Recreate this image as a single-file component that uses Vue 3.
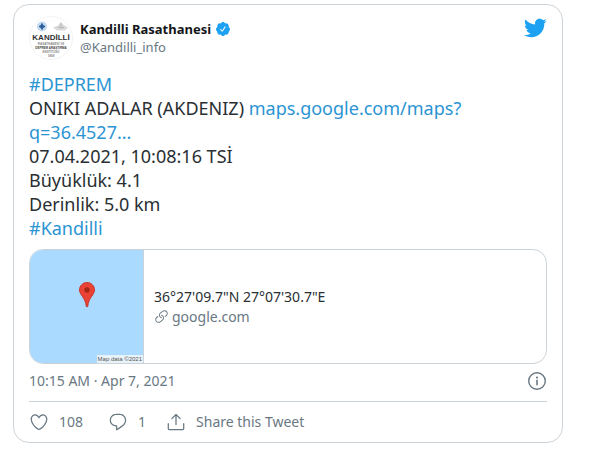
<script setup>
const details = ['07.04.2021, 10:08:16 TSİ', 'Büyüklük: 4.1', 'Derinlik: 5.0 km']
</script>

<template>
  <article class="tweet">
    <header class="head">
      <a class="author" href="#profile">
        <span class="avatar">
          <svg class="emblems" viewBox="0 0 38 15" aria-hidden="true">
            <circle cx="10" cy="9" r="5" fill="#c3d9ef" />
            <path d="M10 6l1 2 2 1-2 1-1 2-1-2-2-1 2-1z" fill="#2f5f9c" stroke="#2f5f9c" />
            <path d="M29 4l2 3 5 3-3 3h-8l-4-3 5-2z" fill="#d9d9d9" />
            <path d="M29 6v5M26 10h6" stroke="#b5b5b5" />
          </svg>
          <span class="avatar-name">KANDİLLİ</span>
          <span class="avatar-small">RASATHANESİ VE</span>
          <span class="avatar-small dark">DEPREM ARAŞTIRMA</span>
          <span class="avatar-small">ENSTİTÜSÜ</span>
          <span class="avatar-small">1868</span>
        </span>
        <span class="names">
          <span class="name">Kandilli Rasathanesi
            <svg class="verified" viewBox="0 0 24 24" aria-label="Verified">
              <path d="M22.5 12.5c0-1.58-.875-2.95-2.148-3.6.154-.435.238-.905.238-1.4 0-2.21-1.71-3.998-3.818-3.998-.47 0-.92.084-1.336.25C14.818 2.415 13.51 1.5 12 1.5s-2.816.917-3.437 2.25c-.415-.165-.866-.25-1.336-.25-2.11 0-3.818 1.79-3.818 4 0 .494.083.964.237 1.4-1.272.65-2.147 2.018-2.147 3.6 0 1.495.782 2.798 1.942 3.486-.02.17-.032.34-.032.514 0 2.21 1.708 4 3.818 4 .47 0 .92-.086 1.335-.25.62 1.334 1.926 2.25 3.437 2.25 1.512 0 2.818-.916 3.437-2.25.415.163.865.248 1.336.248 2.11 0 3.818-1.79 3.818-4 0-.174-.012-.344-.033-.513 1.158-.687 1.943-1.99 1.943-3.484zm-6.616-3.334l-4.334 6.5c-.145.217-.382.334-.625.334-.143 0-.288-.04-.416-.126l-.115-.094-2.415-2.415c-.293-.293-.293-.768 0-1.06s.768-.294 1.06 0l1.77 1.767 3.825-5.74c.23-.345.696-.436 1.04-.207.346.23.44.696.21 1.04z" />
            </svg>
          </span>
          <span class="handle">@Kandilli_info</span>
        </span>
      </a>
      <a class="bird" href="#tweet" aria-label="View on Twitter">
        <svg viewBox="0 0 24 24">
          <path d="M23.643 4.937c-.835.37-1.732.62-2.675.733.962-.576 1.7-1.49 2.048-2.578-.9.534-1.897.922-2.958 1.13-.85-.904-2.06-1.47-3.4-1.47-2.572 0-4.658 2.086-4.658 4.66 0 .364.042.718.12 1.06-3.873-.195-7.304-2.05-9.602-4.868-.4.69-.63 1.49-.63 2.342 0 1.616.823 3.043 2.072 3.878-.764-.025-1.482-.234-2.11-.583v.06c0 2.257 1.605 4.14 3.737 4.568-.392.106-.803.162-1.227.162-.3 0-.593-.028-.877-.082.593 1.85 2.313 3.198 4.352 3.234-1.595 1.25-3.604 1.995-5.786 1.995-.376 0-.747-.022-1.112-.065 2.062 1.323 4.51 2.093 7.14 2.093 8.57 0 13.255-7.098 13.255-13.254 0-.2-.005-.402-.014-.602.91-.658 1.7-1.477 2.323-2.41z" />
        </svg>
      </a>
    </header>

    <div class="body">
      <div><a href="#deprem">#DEPREM</a></div>
      <div>ONIKI ADALAR (AKDENIZ) <a href="#map">maps.google.com/maps?<wbr>q=36.4527...</a></div>
      <div v-for="line in details" :key="line">{{ line }}</div>
      <div><a href="#kandilli">#Kandilli</a></div>
    </div>

    <a class="preview" href="#map">
      <span class="map">
        <svg class="pin" viewBox="0 0 16 26" aria-hidden="true">
          <path d="M8 .5C3.800.5.500 3.800.500 8c0 5 6 7.500 6.800 16.500q.700 1 1.400 0C9.500 15.500 15.500 13 15.500 8 15.500 3.800 12.200.5 8 .5z" fill="#ea4335" stroke="#c5362c" />
          <circle cx="8" cy="8" r="2.700" fill="#a52714" />
        </svg>
        <span class="credit">Map data ©2021</span>
      </span>
      <span class="place">
        <span class="coords">36°27'09.7"N 27°07'30.7"E</span>
        <span class="domain">
          <svg viewBox="0 0 24 24" aria-hidden="true">
            <path d="M11.96 14.945c-.067 0-.136-.01-.203-.027-1.13-.318-2.097-.986-2.795-1.932-.832-1.125-1.176-2.508-.968-3.893s.942-2.605 2.068-3.438l3.53-2.608c2.322-1.716 5.61-1.224 7.33 1.1.83 1.127 1.175 2.51.967 3.895s-.943 2.605-2.07 3.438l-1.48 1.094c-.333.246-.804.175-1.05-.158-.246-.334-.176-.804.158-1.05l1.48-1.095c.803-.592 1.327-1.463 1.476-2.45.148-.988-.098-1.975-.69-2.778-1.225-1.656-3.572-2.01-5.23-.784l-3.53 2.608c-.802.593-1.326 1.464-1.475 2.45-.15.99.097 1.975.69 2.778.498.675 1.187 1.15 1.992 1.377.4.114.633.528.52.928-.092.33-.394.547-.722.547z" />
            <path d="M7.27 22.054c-1.61 0-3.197-.735-4.225-2.125-.832-1.127-1.176-2.51-.968-3.894s.943-2.605 2.07-3.438l1.478-1.094c.334-.245.805-.175 1.05.158s.177.804-.157 1.05l-1.48 1.095c-.803.593-1.326 1.464-1.475 2.45-.148.99.097 1.975.69 2.778 1.225 1.657 3.57 2.01 5.23.785l3.528-2.608c1.658-1.225 2.01-3.57.785-5.23-.498-.674-1.187-1.15-1.992-1.376-.4-.113-.633-.527-.52-.927.112-.4.528-.63.926-.522 1.13.318 2.096.986 2.794 1.932 1.717 2.324 1.224 5.612-1.1 7.33l-3.53 2.608c-.933.693-2.023 1.026-3.105 1.026z" />
          </svg>
          google.com
        </span>
      </span>
    </a>

    <div class="meta">
      <a href="#tweet"><time datetime="2021-04-07T10:15">10:15 AM · Apr 7, 2021</time></a>
      <a class="info" href="#info" aria-label="Twitter Ads info and privacy">
        <svg viewBox="0 0 20 20">
          <circle cx="10" cy="10" r="8.300" fill="none" stroke="currentColor" stroke-width="1.400" />
          <circle cx="10" cy="6.500" r="1.100" />
          <path d="M9.200 8.800h1.600v5.400h-1.600z" />
        </svg>
      </a>
    </div>

    <footer class="actions">
      <a class="like" href="#like" aria-label="108 likes">
        <svg viewBox="0 0 24 24">
          <path d="M12 21.638h-.014C9.403 21.59 1.95 14.856 1.95 8.478c0-3.064 2.525-5.754 5.403-5.754 2.29 0 3.83 1.58 4.646 2.73.814-1.148 2.354-2.73 4.645-2.73 2.88 0 5.404 2.69 5.404 5.755 0 6.376-7.454 13.11-10.037 13.157H12zM7.354 4.225c-2.08 0-3.903 1.988-3.903 4.255 0 5.74 7.034 11.596 8.55 11.658 1.518-.062 8.55-5.917 8.55-11.658 0-2.267-1.823-4.255-3.903-4.255-2.528 0-3.94 2.936-3.952 2.965-.23.562-1.156.562-1.387 0-.014-.03-1.425-2.965-3.954-2.965z" />
        </svg>
        <span>108</span>
      </a>
      <a href="#reply" aria-label="1 reply">
        <svg viewBox="0 0 24 24">
          <path d="M14.046 2.242l-4.148-.01h-.002c-4.374 0-7.8 3.427-7.8 7.802 0 4.098 3.186 7.206 7.465 7.37v3.828c0 .108.044.286.12.403.142.225.384.347.632.347.138 0 .277-.038.402-.118.264-.168 6.473-4.14 8.088-5.506 1.902-1.61 3.04-3.97 3.043-6.312v-.017c-.006-4.367-3.43-7.787-7.8-7.788zm3.787 12.972c-1.134.96-4.862 3.405-6.772 4.643V16.67c0-.414-.335-.75-.75-.75h-.396c-3.66 0-6.318-2.476-6.318-5.886 0-3.534 2.768-6.302 6.3-6.302l4.147.01h.002c3.532 0 6.3 2.766 6.302 6.296-.003 1.91-.942 3.844-2.514 5.176z" />
        </svg>
        <span>1</span>
      </a>
      <button type="button">
        <svg viewBox="0 0 24 24" aria-hidden="true">
          <path d="M17.53 7.47l-5-5c-.293-.293-.768-.293-1.06 0l-5 5c-.294.293-.294.768 0 1.06s.767.294 1.06 0l3.72-3.72V15c0 .414.336.75.75.75s.75-.336.75-.75V4.81l3.72 3.72c.146.147.338.22.53.22s.384-.072.53-.22c.293-.293.293-.767 0-1.06z" />
          <path d="M19.708 21.944H4.292C3.028 21.944 2 20.916 2 19.652V14c0-.414.336-.75.75-.75s.75.336.75.75v5.652c0 .437.355.792.792.792h15.416c.437 0 .792-.355.792-.792V14c0-.414.336-.75.75-.75s.75.336.75.75v5.652c0 1.264-1.028 2.292-2.292 2.292z" />
        </svg>
        <span>Share this Tweet</span>
      </button>
    </footer>
  </article>
</template>

<style>
body {
  background: #fff;
}
</style>

<style scoped>
.tweet {
  box-sizing: border-box;
  max-width: 550px;
  margin: 4px 13px;
  padding: 11px 15px 10px;
  border: 1px solid #ccd3d8;
  border-radius: 16px;
  color: #292f33;
  font-family: "Noto Sans", "Open Sans", sans-serif;
  font-size: 14px;
  line-height: 20px;
}

a {
  color: #2b94d3;
  text-decoration: none;
}

svg {
  display: block;
  flex: none;
  fill: currentColor;
}

.head {
  display: flex;
  justify-content: space-between;
  align-items: flex-start;
}

.author {
  display: flex;
  gap: 7px;
  align-items: center;
}

.avatar {
  display: flex;
  flex-direction: column;
  align-items: center;
  box-sizing: border-box;
  width: 44px;
  height: 44px;
  overflow: hidden;
  border: 1px solid #f3f3f3;
  border-radius: 50%;
  font-family: "Liberation Sans", sans-serif;
}

.emblems {
  width: 38px;
  height: 16px;
}

.avatar-name {
  color: #333;
  font-size: 8px;
  font-weight: 700;
  line-height: 9px;
}

.avatar-small {
  color: #888;
  font-size: 3px;
  font-weight: 700;
  line-height: 4px;
  white-space: nowrap;
}

.dark {
  color: #444;
}

.names {
  display: flex;
  flex-direction: column;
  line-height: 18px;
}

.name {
  display: flex;
  gap: 4px;
  align-items: center;
  color: #14171a;
  font-size: 13px;
  font-weight: 700;
}

.verified {
  width: 16px;
  height: 16px;
  color: #1da1f2;
}

.handle {
  color: #697882;
  font-size: 13px;
}

.bird {
  color: #1da1f2;
}

.bird svg {
  width: 24px;
  height: 24px;
}

.body {
  margin-top: 12px;
  font-size: 18px;
  line-height: 24px;
}

.preview {
  display: flex;
  margin-top: 9px;
  overflow: hidden;
  border: 1px solid #ccd3d8;
  border-radius: 14px;
}

.map {
  position: relative;
  display: flex;
  flex: none;
  justify-content: center;
  align-items: center;
  width: 113px;
  height: 113px;
  border-right: 1px solid #ccd3d8;
  background: #aadaff;
}

.pin {
  width: 16px;
  height: 26px;
  margin-bottom: 24px;
}

.credit {
  position: absolute;
  right: 0;
  bottom: 0;
  padding: 0 1px;
  background: #e8f2f9;
  color: #555;
  font: 6px/8px "Liberation Sans", sans-serif;
}

.place {
  display: flex;
  flex-direction: column;
  justify-content: center;
  padding: 0 10px;
}

.coords {
  color: #292f33;
}

.domain {
  display: flex;
  gap: 3px;
  align-items: center;
  color: #697882;
}

.domain svg {
  width: 15px;
  height: 15px;
}

.meta {
  display: flex;
  justify-content: space-between;
  align-items: center;
  padding: 7px 0 10px;
  border-bottom: 1px solid #ccd3d8;
}

.meta a {
  color: #697882;
}

.info svg {
  width: 20px;
  height: 20px;
}

.actions {
  display: flex;
  gap: 20px;
  align-items: center;
  padding-top: 10px;
}

.actions a,
.actions button {
  display: flex;
  gap: 10px;
  align-items: center;
  padding: 0;
  border: 0;
  background: none;
  color: #697882;
  font: inherit;
}

.actions .like {
  padding-right: 5px;
}

.actions svg {
  width: 20px;
  height: 20px;
}
</style>
